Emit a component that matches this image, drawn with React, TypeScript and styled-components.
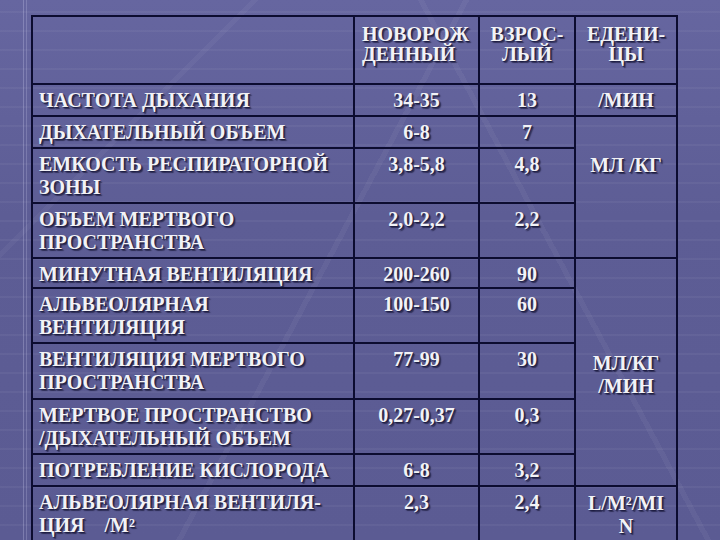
import React from "react";
import styled, { createGlobalStyle } from "styled-components";

const Global = createGlobalStyle`
  html, body {
    margin: 0;
    padding: 0;
    width: 720px;
    height: 540px;
    overflow: hidden;
  }
  body {
    background-color: #5e5e96;
    background-image:
      linear-gradient(to right, transparent 0 23px, rgba(200,200,235,0.3) 23px 24px, transparent 24px 26px, rgba(200,200,235,0.25) 26px 27px, transparent 27px),
      linear-gradient(118deg, transparent 0 46%, rgba(255,255,255,0.045) 46% 46.6%, transparent 46.6% 100%),
      linear-gradient(62deg, transparent 0 70%, rgba(255,255,255,0.045) 70% 70.6%, transparent 70.6% 100%),
      linear-gradient(135deg, transparent 0 20%, rgba(255,255,255,0.04) 20% 20.5%, transparent 20.5% 100%),
      repeating-linear-gradient(to bottom, transparent 0 11px, rgba(255,255,255,0.045) 11px 13px, transparent 13px 19px),
      linear-gradient(to bottom, #6666a0 0%, #5d5d95 40%, #5b5b93 100%);
    font-family: "Liberation Serif", "Times New Roman", serif;
  }
`;

const Page = styled.div`
  padding: 15px 0 0 31px;
`;

const Table = styled.table`
  border-collapse: collapse;
  table-layout: fixed;
  width: 647px;
  border: 2px solid #0c0c30;
  color: #f2f2f6;
  font-family: "Liberation Serif", "Times New Roman", serif;
  font-weight: bold;
  font-size: 20px;
  text-shadow: 1px 1px 1px #1c1c40, 2px 2px 1px rgba(20, 20, 50, 0.6);
`;

const Row = styled.tr<{ $h: number }>`
  height: ${(p) => p.$h}px;
`;

const Cell = styled.td`
  border: 2px solid #0c0c30;
  padding: 4px 6px 0 6px;
  vertical-align: top;
  line-height: 23px;
  box-sizing: border-box;
  overflow: hidden;
`;

const HeadCell = styled(Cell)<{ $left?: boolean }>`
  text-align: ${(p) => (p.$left ? "left" : "center")};
  padding: 7px ${(p) => (p.$left ? "4px 0 7px" : "2px 0 2px")};
  line-height: 20px;
`;

const LabelCell = styled(Cell)`
  text-align: left;
  white-space: pre;
`;

const NumCell = styled(Cell)`
  text-align: center;
  padding-left: 2px;
  padding-right: 2px;
`;

const UnitCell = styled(Cell)<{ $valign?: string; $pt?: number }>`
  text-align: center;
  vertical-align: ${(p) => p.$valign || "top"};
  padding-top: ${(p) => (p.$pt ?? 4)}px;
  padding-left: 2px;
  padding-right: 2px;
`;

type R = { h: number; label: string; a: string; b: string };

const rows: R[] = [
  { h: 32, label: "ЧАСТОТА ДЫХАНИЯ", a: "34-35", b: "13" },
  { h: 32, label: "ДЫХАТЕЛЬНЫЙ ОБЪЕМ", a: "6-8", b: "7" },
  { h: 55, label: "ЕМКОСТЬ РЕСПИРАТОРНОЙ\nЗОНЫ", a: "3,8-5,8", b: "4,8" },
  { h: 55, label: "ОБЪЕМ МЕРТВОГО\nПРОСТРАНСТВА", a: "2,0-2,2", b: "2,2" },
  { h: 30, label: "МИНУТНАЯ ВЕНТИЛЯЦИЯ", a: "200-260", b: "90" },
  { h: 55, label: "АЛЬВЕОЛЯРНАЯ\nВЕНТИЛЯЦИЯ", a: "100-150", b: "60" },
  { h: 56, label: "ВЕНТИЛЯЦИЯ МЕРТВОГО\nПРОСТРАНСТВА", a: "77-99", b: "30" },
  { h: 55, label: "МЕРТВОЕ ПРОСТРАНСТВО\n/ДЫХАТЕЛЬНЫЙ ОБЪЕМ", a: "0,27-0,37", b: "0,3" },
  { h: 32, label: "ПОТРЕБЛЕНИЕ КИСЛОРОДА", a: "6-8", b: "3,2" },
  { h: 62, label: "АЛЬВЕОЛЯРНАЯ ВЕНТИЛЯ-\nЦИЯ    /М²", a: "2,3", b: "2,4" },
];

function unitFor(i: number) {
  if (i === 0) return <UnitCell>/МИН</UnitCell>;
  if (i === 1)
    return (
      <UnitCell rowSpan={3} $pt={37}>
        МЛ /КГ
      </UnitCell>
    );
  if (i === 4)
    return (
      <UnitCell rowSpan={5} $valign="middle" $pt={5}>
        МЛ/КГ
        <br />
        /МИН
      </UnitCell>
    );
  if (i === 9)
    return (
      <UnitCell $pt={5}>
        L/M²/MI
        <br />N
      </UnitCell>
    );
  return null;
}

export default function App() {
  return (
    <>
      <Global />
      <Page>
        <Table>
          <colgroup>
            <col style={{ width: 322 }} />
            <col style={{ width: 125 }} />
            <col style={{ width: 96 }} />
            <col style={{ width: 102 }} />
          </colgroup>
          <tbody>
            <Row $h={68}>
              <HeadCell />
              <HeadCell $left>
                НОВОРОЖ
                <br />
                ДЕННЫЙ
              </HeadCell>
              <HeadCell>
                ВЗРОС-
                <br />
                ЛЫЙ
              </HeadCell>
              <HeadCell>
                ЕДЕНИ-
                <br />
                ЦЫ
              </HeadCell>
            </Row>
            {rows.map((r, i) => (
              <Row key={i} $h={r.h}>
                <LabelCell>{r.label}</LabelCell>
                <NumCell>{r.a}</NumCell>
                <NumCell>{r.b}</NumCell>
                {unitFor(i)}
              </Row>
            ))}
          </tbody>
        </Table>
      </Page>
    </>
  );
}
